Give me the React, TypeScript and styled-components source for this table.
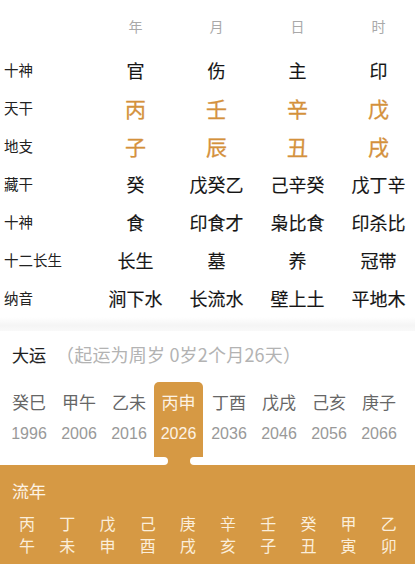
import React from "react";
import styled, { createGlobalStyle } from "styled-components";

const Global = createGlobalStyle`
  html, body { margin: 0; padding: 0; background: #fff; }
  body { font-family: "Noto Sans CJK SC", "Noto Sans", sans-serif; overflow: hidden; width: 415px; }
`;

const ORANGE = "#d69944";

const Page = styled.div`
  width: 415px;
  height: 564px;
  display: flex;
  flex-direction: column;
  overflow: hidden;
`;

const Table = styled.div`
  display: grid;
  grid-template-columns: 95px repeat(4, 81px);
  grid-template-rows: 51px repeat(7, 38px);
  align-items: center;
`;

const HeadCell = styled.div`
  text-align: center;
  font-size: 14px;
  color: #a9a9a9;
  line-height: 20px;
`;

const Label = styled.div`
  padding-left: 4px;
  font-size: 14.5px;
  color: #222;
  line-height: 20px;
`;

const Cell = styled.div<{ $accent?: boolean }>`
  text-align: center;
  white-space: nowrap;
  font-size: ${(p) => (p.$accent ? "21px" : "18px")};
  font-weight: 400;
  -webkit-text-stroke: ${(p) => (p.$accent ? "0.3px" : "0.15px")} currentColor;
  color: ${(p) => (p.$accent ? "#d4913c" : "#151515")};
  line-height: 26px;
`;

const Divider = styled.div`
  height: 14px;
  background: linear-gradient(#ffffff, #f5f5f5 60%, #f9f9f9);
`;

const Dayun = styled.section`
  background: #fff;
  padding-top: 10px;
  display: flex;
  flex-direction: column;
`;

const TitleRow = styled.div`
  display: flex;
  align-items: center;
  padding-left: 12px;
  height: 26px;
  gap: 10px;
`;

const Title = styled.span`
  font-size: 17px;
  color: #1e1e1e;
  -webkit-text-stroke: 0.15px currentColor;
`;

const Sub = styled.span`
  font-size: 18px;
  color: #b3b3b3;
  letter-spacing: 0.2px;
`;

const ItemRow = styled.div`
  display: flex;
  padding-left: 4px;
  margin-top: 15px;
`;

const Item = styled.div<{ $active?: boolean }>`
  position: relative;
  width: ${(p) => (p.$active ? "49px" : "50px")};
  margin-right: ${(p) => (p.$active ? "1px" : "0")};
  height: 75px;
  box-sizing: border-box;
  padding-top: 9px;
  display: flex;
  flex-direction: column;
  align-items: center;
  border-radius: 5px 5px 0 0;
  background: ${(p) => (p.$active ? ORANGE : "transparent")};
`;

const Gz = styled.div<{ $active?: boolean }>`
  font-size: 17px;
  line-height: 22px;
  color: ${(p) => (p.$active ? "#fdf3e4" : "#666")};
  white-space: nowrap;
`;

const Year = styled.div<{ $active?: boolean }>`
  margin-top: 11px;
  font-family: "Liberation Sans", "Noto Sans", sans-serif;
  font-size: 16px;
  line-height: 20px;
  color: ${(p) => (p.$active ? "#fdf3e4" : "#999")};
`;

const Neck = styled.div`
  position: absolute;
  left: 7px;
  bottom: -8px;
  width: 36px;
  height: 8px;
  background: ${ORANGE};
  &::before,
  &::after {
    content: "";
    position: absolute;
    top: 0;
    width: 16px;
    height: 8px;
    border-radius: 4px;
    background: #fff;
  }
  &::before { left: -9px; }
  &::after { right: -9px; }
`;

const Panel = styled.section`
  flex: 1;
  margin-top: 8px;
  background: ${ORANGE};
  padding: 16px 6px 0 7px;
  display: flex;
  flex-direction: column;
`;

const PanelTitle = styled.div`
  padding-left: 5px;
  font-size: 17px;
  line-height: 20px;
  color: #fdf3e4;
`;

const YearGrid = styled.div`
  margin-top: 11px;
  display: grid;
  grid-template-columns: repeat(10, 40.2px);
`;

const YearCol = styled.div`
  display: flex;
  flex-direction: column;
  align-items: center;
  font-size: 16px;
  line-height: 22px;
  color: #fbeedb;
`;

const headers = ["年", "月", "日", "时"];
const rows: { label: string; values: string[]; accent?: boolean }[] = [
  { label: "十神", values: ["官", "伤", "主", "印"] },
  { label: "天干", values: ["丙", "壬", "辛", "戊"], accent: true },
  { label: "地支", values: ["子", "辰", "丑", "戌"], accent: true },
  { label: "藏干", values: ["癸", "戊癸乙", "己辛癸", "戊丁辛"] },
  { label: "十神", values: ["食", "印食才", "枭比食", "印杀比"] },
  { label: "十二长生", values: ["长生", "墓", "养", "冠带"] },
  { label: "纳音", values: ["涧下水", "长流水", "壁上土", "平地木"] },
];

const dayun = [
  ["癸巳", "1996"],
  ["甲午", "2006"],
  ["乙未", "2016"],
  ["丙申", "2026"],
  ["丁酉", "2036"],
  ["戊戌", "2046"],
  ["己亥", "2056"],
  ["庚子", "2066"],
];

const liunian = [
  ["丙", "午"],
  ["丁", "未"],
  ["戊", "申"],
  ["己", "酉"],
  ["庚", "戌"],
  ["辛", "亥"],
  ["壬", "子"],
  ["癸", "丑"],
  ["甲", "寅"],
  ["乙", "卯"],
];

export default function App() {
  return (
    <Page>
      <Global />
      <Table>
        <div />
        {headers.map((h) => (
          <HeadCell key={h}>{h}</HeadCell>
        ))}
        {rows.map((r, i) => (
          <React.Fragment key={i}>
            <Label>{r.label}</Label>
            {r.values.map((v, j) => (
              <Cell key={j} $accent={r.accent}>
                {v}
              </Cell>
            ))}
          </React.Fragment>
        ))}
      </Table>
      <Divider />
      <Dayun>
        <TitleRow>
          <Title>大运</Title>
          <Sub>（起运为周岁 0岁2个月26天）</Sub>
        </TitleRow>
        <ItemRow>
          {dayun.map(([g, y], i) => {
            const active = i === 3;
            return (
              <Item key={y} $active={active}>
                <Gz $active={active}>{g}</Gz>
                <Year $active={active}>{y}</Year>
                {active && <Neck />}
              </Item>
            );
          })}
        </ItemRow>
      </Dayun>
      <Panel>
        <PanelTitle>流年</PanelTitle>
        <YearGrid>
          {liunian.map(([a, b]) => (
            <YearCol key={a + b}>
              <span>{a}</span>
              <span>{b}</span>
            </YearCol>
          ))}
        </YearGrid>
      </Panel>
    </Page>
  );
}
